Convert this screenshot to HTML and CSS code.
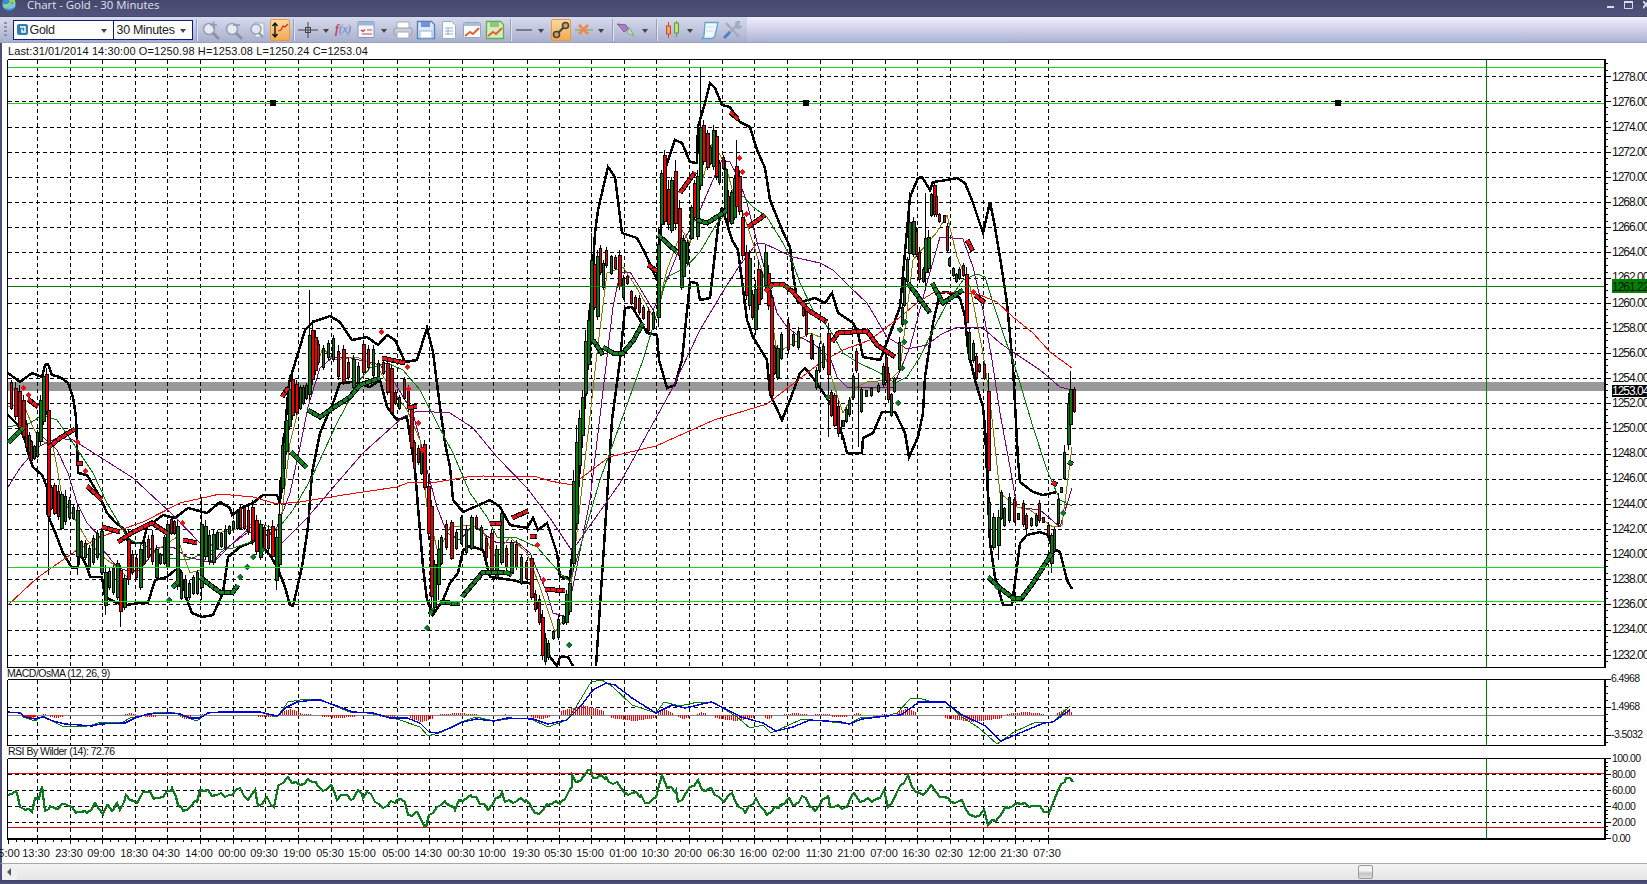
FILE: index.html
```html
<!DOCTYPE html>
<html lang="en">
<head>
<meta charset="utf-8">
<title>Chart - Gold - 30 Minutes</title>
<link rel="stylesheet" href="styles.css">
</head>
<body>
<div class="window">
  <header class="titlebar">
    <svg class="appicon" width="16" height="14" viewBox="0 0 16 14"><circle cx="7" cy="5" r="7" fill="#3b8fd0"/><path d="M1 8q6 4 12 0v-3H1z" fill="#7cc0ea"/><path d="M3 9L11 1M7 1h5v5" fill="none" stroke="#9bd45a" stroke-width="2"/></svg>
    <span class="title">Chart - Gold - 30 Minutes</span>
    <span class="winctl">
      <svg width="8" height="8" viewBox="0 0 8 8"><rect y="5" width="7" height="2" fill="#d9dbe8"/></svg>
      <svg width="10" height="8" viewBox="0 0 10 8"><path d="M.5 1.5h8v6h-8z" fill="none" stroke="#d9dbe8"/><rect width="9" height="2" fill="#d9dbe8"/></svg>
      <svg width="6" height="8" viewBox="0 0 6 8"><path d="M0 0l6 7M6 0L0 7" stroke="#d9dbe8" stroke-width="2"/></svg>
    </span>
  </header>

  <nav class="toolbar">
    <div class="tools">
      <span class="grip"></span>
      <div class="combo combo-symbol">
        <svg class="symbol" width="11" height="11" viewBox="0 0 11 11"><rect width="11" height="11" rx="2" fill="#2f7fb0"/><path d="M3 3h5v5H5V5" fill="none" stroke="#fff" stroke-width="1.4"/></svg>
        <span class="combo-text">Gold</span><i class="arrow"></i>
      </div>
      <div class="combo combo-period"><span class="combo-text clip">30 Minutes</span><i class="arrow"></i></div>
      <span class="sep"></span>
      <svg class="ico" width="22" height="22" viewBox="0 0 22 22"><circle cx="9" cy="10" r="5.500" fill="#e6ecf5" stroke="#98a0b0" stroke-width="1.600"/><path d="M13 14l6 6" stroke="#8a909e" stroke-width="2.600"/><path d="M10 6h7M13.500 2.500v7" stroke="#8f99ae" stroke-width="1.600"/></svg>
      <svg class="ico" width="22" height="22" viewBox="0 0 22 22"><circle cx="9" cy="10" r="5.500" fill="#e6ecf5" stroke="#98a0b0" stroke-width="1.600"/><path d="M13 14l6 6" stroke="#8a909e" stroke-width="2.600"/><path d="M10 6h7" stroke="#8f99ae" stroke-width="1.600"/></svg>
      <svg class="ico" width="22" height="22" viewBox="0 0 22 22"><rect x="9" y="4" width="9" height="14" fill="#eef1f7" stroke="#a9b0be"/><circle cx="10" cy="10" r="5" fill="#dfe9f6" stroke="#98a0b0" stroke-width="1.500"/><path d="M13 14l4 4" stroke="#8a909e" stroke-width="2"/></svg>
      <span class="btn-on"><svg width="18" height="20" viewBox="0 0 18 20"><path d="M4 3v14M1.500 6L4 3l2.500 3M1.500 14L4 17l2.500-3" fill="none" stroke="#111" stroke-width="1.400"/><path d="M7 11l3-1 2-4 2 1 3-3" fill="none" stroke="#e2231a" stroke-width="1.200"/></svg></span>
      <span class="sep"></span>
      <svg class="ico" width="22" height="22" viewBox="0 0 22 22"><path d="M1 11h20M11 3v16" stroke="#444" stroke-width="1"/><rect x="8.500" y="8.500" width="5" height="5" fill="none" stroke="#444"/></svg>
      <i class="arrow drop"></i>
      <span class="fx"><b>f</b>(x)</span>
      <svg class="ico" width="20" height="22" viewBox="0 0 20 22"><rect x="1" y="2.500" width="16" height="16" rx="1" fill="#f4f6fb" stroke="#7f9ab8"/><rect x="1" y="2.500" width="16" height="4" fill="#9db6d2"/><path d="M4 11l2 1.500 2-2" fill="none" stroke="#d8332a" stroke-width="1.300"/><path d="M10 11h5M5 15h10" stroke="#c04a4a"/></svg>
      <i class="arrow drop"></i>
      <svg class="ico" width="22" height="22" viewBox="0 0 22 22"><rect x="5" y="3" width="12" height="7" fill="#fff" stroke="#a4aab6"/><rect x="2" y="9" width="18" height="7" rx="2" fill="#ccd0da" stroke="#949aa8"/><rect x="5" y="13" width="12" height="6" fill="#fff" stroke="#a4aab6"/></svg>
      <svg class="ico" width="22" height="22" viewBox="0 0 22 22"><path d="M2.500 2.500h14l3 3v14h-17z" fill="#dbe6f6" stroke="#5a80c0" stroke-width="1.400"/><rect x="6" y="3" width="9" height="5" fill="#6f96d0"/><rect x="5" y="12" width="12" height="7" fill="#fff" stroke="#9ab4da"/></svg>
      <svg class="ico" width="22" height="22" viewBox="0 0 22 22"><path d="M4.500 2.500h9l4 4v13h-13z" fill="#fff" stroke="#8fb4d0"/><path d="M7 9h8M7 12h8M7 15h8M10 9v7" stroke="#8ab2d0"/></svg>
      <svg class="ico" width="22" height="22" viewBox="0 0 22 22"><rect x="2.500" y="3.500" width="17" height="15" rx="1" fill="#fff" stroke="#8fa9c4"/><rect x="3" y="4" width="16" height="3" fill="#a8bfd8"/><path d="M4 17l5-4 3 2 6-6" fill="none" stroke="#e0603a" stroke-width="2"/></svg>
      <svg class="ico" width="22" height="22" viewBox="0 0 22 22"><path d="M2.500 2.500h14l3 3v14h-17z" fill="#d4ecc0" stroke="#66ab50" stroke-width="1.300"/><rect x="6" y="3" width="9" height="5" fill="#8fc878"/><path d="M4 17l5-4 3 2 6-6" fill="none" stroke="#e0603a" stroke-width="2"/></svg>
      <span class="sep"></span>
      <svg class="ico" width="20" height="22" viewBox="0 0 20 22"><path d="M2 11h16" stroke="#333"/></svg>
      <i class="arrow drop"></i>
      <span class="btn-on btn-link"><svg width="18" height="18" viewBox="0 0 18 18"><path d="M4 14l10-10" stroke="#444" stroke-width="2.200"/><circle cx="4.500" cy="13.500" r="3" fill="#d9a05a" stroke="#444" stroke-width="1.600"/><circle cx="13.500" cy="4.500" r="3" fill="#d9a05a" stroke="#444" stroke-width="1.600"/></svg></span>
      <svg class="ico" width="20" height="22" viewBox="0 0 20 22"><path d="M1 11h18" stroke="#78a83c"/><path d="M5 6l9 9M14 6l-9 9" stroke="#ef8a50" stroke-width="3"/></svg>
      <i class="arrow drop"></i>
      <span class="sep"></span>
      <svg class="ico" width="22" height="22" viewBox="0 0 22 22"><path d="M1 5l9 1 2 4-4 3-3-4z" fill="#b07cc4" stroke="#7a5c98"/><path d="M13 8l5 9-7-3z" fill="#c4e0b8" stroke="#88a88a"/></svg>
      <i class="arrow drop"></i>
      <span class="sep"></span>
      <svg class="ico ico-candle" width="20" height="22" viewBox="0 0 20 22"><path d="M5.500 3v16" stroke="#d8402a"/><rect x="3.500" y="7" width="4" height="8" fill="#f5a85e" stroke="#d8402a"/><path d="M13.500 2v16" stroke="#5c9a44"/><rect x="11.500" y="4" width="4" height="10" fill="#c0e47a" stroke="#5c9a44"/></svg>
      <i class="arrow drop"></i>
      <svg class="ico" width="22" height="22" viewBox="0 0 22 22"><path d="M7 3.500h13l-3 13q-1 3-4 3H3q3 0 3-3z" fill="#f2f8fd" stroke="#5ca6d0" stroke-width="1.300"/><path d="M9 8h7M8 12h7" stroke="#c4dcec"/></svg>
      <svg class="ico" width="22" height="22" viewBox="0 0 22 22"><path d="M5 4l13 14" stroke="#a2acbc" stroke-width="2.500"/><path d="M18 4L8 14" stroke="#a2acbc" stroke-width="2.500"/><path d="M9 13l-6 6" stroke="#4a80c4" stroke-width="3"/><path d="M14 4a3.500 3.500 0 0 1 6-1l-3 2 1 2 3-1a3.500 3.500 0 0 1-6 3z" fill="#a2acbc"/></svg>
    </div>
    <div class="toolbar-rest"></div>
  </nav>

  <div class="info">Last:31/01/2014 14:30:00 O=1250.98 H=1253.08 L=1250.24 C=1253.04</div>

  <svg id="chart" class="chart" width="1647" height="804" viewBox="0 59 1647 804">
    <g id="plot"></g>
    <g class="lbl-main">
      <text x="1612" y="81">1278.00</text><text x="1612" y="106">1276.00</text><text x="1612" y="131">1274.00</text><text x="1612" y="156">1272.00</text><text x="1612" y="181">1270.00</text><text x="1612" y="206">1268.00</text><text x="1612" y="231">1266.00</text><text x="1612" y="256">1264.00</text><text x="1612" y="281">1262.00</text><text x="1612" y="307">1260.00</text><text x="1612" y="332">1258.00</text><text x="1612" y="357">1256.00</text><text x="1612" y="382">1254.00</text><text x="1612" y="407">1252.00</text><text x="1612" y="432">1250.00</text><text x="1612" y="457">1248.00</text><text x="1612" y="482">1246.00</text><text x="1612" y="508">1244.00</text><text x="1612" y="533">1242.00</text><text x="1612" y="558">1240.00</text><text x="1612" y="583">1238.00</text><text x="1612" y="608">1236.00</text><text x="1612" y="633">1234.00</text><text x="1612" y="659">1232.00</text>
    </g>
    <rect class="tag-green" x="1612" y="279" width="35" height="14"/>
    <text class="lbl-main" x="1612" y="291">1261.22</text>
    <rect class="tag-black" x="1612" y="385" width="35" height="12"/>
    <text class="lbl-main lbl-white" x="1612" y="395">1253.04</text>
    <g class="lbl-small">
      <text x="1611" y="682">6.4968</text><text x="1611" y="710">1.4968</text><text x="1611" y="738">-3.5032</text>
      <text x="1612" y="762">100.00</text><text x="1612" y="778">80.00</text><text x="1612" y="794">60.00</text><text x="1612" y="810">40.00</text><text x="1612" y="826">20.00</text><text x="1612" y="842">0.00</text>
    </g>
    <g class="lbl-pane">
      <text x="7" y="677">MACD/OsMA (12, 26, 9)</text>
      <text x="8" y="755">RSI By Wilder (14): 72.76</text>
    </g>
    <g class="lbl-time">
      <text x="6" y="857">15:00</text><text x="36" y="857">13:30</text><text x="69" y="857">23:30</text><text x="101" y="857">09:00</text><text x="134" y="857">18:30</text><text x="166" y="857">04:30</text><text x="199" y="857">14:00</text><text x="232" y="857">00:00</text><text x="264" y="857">09:30</text><text x="297" y="857">19:00</text><text x="330" y="857">05:30</text><text x="362" y="857">15:00</text><text x="396" y="857">05:00</text><text x="428" y="857">14:30</text><text x="461" y="857">00:30</text><text x="492" y="857">10:00</text><text x="526" y="857">19:30</text><text x="558" y="857">05:30</text><text x="590" y="857">15:00</text><text x="623" y="857">01:00</text><text x="655" y="857">10:30</text><text x="688" y="857">20:00</text><text x="721" y="857">06:30</text><text x="753" y="857">16:00</text><text x="786" y="857">02:00</text><text x="819" y="857">11:30</text><text x="851" y="857">21:00</text><text x="884" y="857">07:00</text><text x="916" y="857">16:30</text><text x="949" y="857">02:30</text><text x="982" y="857">12:00</text><text x="1014" y="857">21:30</text><text x="1047" y="857">07:30</text>
    </g>
  </svg>

  <div class="scrollbar">
    <span class="scroll-left"><i></i></span>
    <span class="scroll-thumb"></span>
  </div>
  <footer class="bottombar"></footer>
</div>
<script src="chart.js"></script>
</body>
</html>
```

FILE: styles.css
```css
* { box-sizing: border-box; }
html, body { margin: 0; padding: 0; height: 100%; overflow: hidden; background: #fff; }
body { font-family: "Liberation Sans", Arial, sans-serif; }
.window { width: 1647px; height: 884px; display: flex; flex-direction: column; overflow: hidden; }

.titlebar { height: 17px; flex: none; display: flex; align-items: flex-start; background: linear-gradient(#45486c, #50537c); border-bottom: 1px solid #474a6e; position: relative; overflow: hidden; }
.appicon { margin: -1px 0 0 2px; flex: none; }
.title { font-family: "Open Sans", sans-serif; font-size: 11.400px; line-height: 12px; color: #e0e1ec; margin: -1px 0 0 9px; }
.winctl { margin-left: auto; display: flex; gap: 9px; margin-top: 1px; margin-right: -2px; }

.toolbar { height: 26px; flex: none; display: flex; border-bottom: 1px solid #99a0c2; background: linear-gradient(#f0eefe, #aeb5d3); }
.tools { width: 747px; flex: none; display: flex; align-items: center; padding-left: 4px; background: linear-gradient(#d8dbee, #a9b0cd); }
.toolbar-rest { flex: 1; }
.grip { width: 3px; height: 16px; flex: none; margin-right: 6px; background: repeating-linear-gradient(#8a90a8 0 2px, transparent 2px 4px); }
.combo { height: 20px; flex: none; border: 1.500px solid #0c1b78; background: #fff; display: flex; align-items: center; font-size: 12.500px; letter-spacing: -.3px; color: #222; position: relative; }
.combo-symbol { width: 101px; padding-left: 3px; }
.combo-period { width: 80px; padding-left: 1px; margin-left: -1px; }
.combo-text { margin-left: 1.500px; }
.clip { width: 58px; overflow: hidden; white-space: nowrap; }
.symbol { flex: none; }
.arrow { display: block; flex: none; width: 0; height: 0; border: 3px solid transparent; border-top: 4px solid #444; border-bottom: 0; }
.combo .arrow { position: absolute; right: 6px; top: 8px; }
.drop { margin: 2px 5px 0 3px; }
.sep { width: 1px; height: 22px; flex: none; background: #99a0ba; border-right: 1px solid #dfe2f0; box-sizing: content-box; margin: 0 2px 0 3px; }
.ico { flex: none; margin-right: 1px; }
.ico-candle { margin-left: 3px; }
.btn-on { width: 20px; height: 22px; flex: none; display: flex; align-items: center; justify-content: center; background: linear-gradient(#fbd9a0, #f5a850); border: 1px solid #e89a3c; border-radius: 2px; margin-left: 1px; }
.btn-link { margin: 0 3px 0 2px; }
.fx { font: italic 700 12px "Liberation Serif", serif; color: #7f93c4; width: 22px; flex: none; margin-left: 1px; white-space: nowrap; letter-spacing: -.5px; }
.fx b { color: #c8454a; }

.info { height: 16px; flex: none; font-size: 11px; letter-spacing: .12px; line-height: 16px; padding-left: 6px; color: #111; border-left: 2px solid #4c4f78; white-space: nowrap; }
.chart { display: block; flex: none; shape-rendering: crispEdges; }
.chart text { font-family: "Liberation Sans", Arial, sans-serif; fill: #111; shape-rendering: auto; }
.lbl-main text, text.lbl-main { font-size: 12px; letter-spacing: -1px; }
.lbl-white { fill: #fff !important; }
.lbl-small text { font-size: 10.500px; letter-spacing: -.6px; }
.lbl-pane text { font-size: 10.500px; letter-spacing: -.5px; }
.lbl-time text { font-size: 11px; text-anchor: middle; }
.tag-green { fill: #008000; }
.tag-black { fill: #000; }

.l { fill: none; }
.frame { stroke: #000; stroke-width: 1; }
.frame2 { stroke: #000; stroke-width: 2; }
.grid { stroke: #000; stroke-width: 1; stroke-dasharray: 4 3; }
.band { stroke: #999; stroke-width: 9; }
.hl-bright { stroke: #1cd41c; stroke-width: 1; }
.hl-dark { stroke: #008000; stroke-width: 1; }
.zero { stroke: #888; stroke-width: 1; }
.hl-red { stroke: #e00000; stroke-width: 1; }
.bb { stroke: #000; stroke-width: 2.500; }
.ma-red { stroke: #f00; stroke-width: 1; }
.ma-purple { stroke: #800080; stroke-width: 1; }
.ma-olive { stroke: #808000; stroke-width: 1; }
.ma-green { stroke: #008000; stroke-width: 1; }
.mk-out { stroke: #000; stroke-width: 5; }
.mk-red { stroke: #ff1010; stroke-width: 3; stroke-dasharray: 5 1; }
.mk-green { stroke: #0a8a1a; stroke-width: 3; stroke-dasharray: 5 1; }
.dot-red { fill: #f01010; }
.dot-green { fill: #0a7a1a; stroke: #033; stroke-width: .5; }
.wick { stroke: #000; stroke-width: 1; }
.c-black { fill: #000; }
.c-red { fill: #f00000; }
.c-green { fill: #087a08; }
.handle { fill: #000; }
.macd-blue { stroke: #0000e0; stroke-width: 1.400; }
.macd-green { stroke: #008000; stroke-width: 1; }
.hist { stroke: #f00; stroke-width: 1; }
.rsi { stroke: #0a7a1a; stroke-width: 2.200; }
.edge { fill: #4c4f78; }

.scrollbar { height: 17px; flex: none; display: flex; align-items: center; border-top: 1px solid #a8a8a8; border-left: 2px solid #4c4f78; background: linear-gradient(#f3f3f3, #e5e5e5); }
.scroll-left { width: 15px; height: 16px; display: flex; align-items: center; padding-left: 5px; background: #f0f0f0; }
.scroll-left i { display: block; border: 4px solid transparent; border-right: 4px solid #555; border-left: 0; }
.scroll-thumb { width: 15px; height: 14px; margin-left: 1341px; border: 1px solid #999; border-radius: 2px; background: linear-gradient(#f4f4f4 0 40%, #c4c4c4 60%, #dedede); }
.bottombar { height: 4px; flex: none; background: linear-gradient(#3f4268, #4f527c); }
```

FILE: chart.js
```js
var NS = 'http://www.w3.org/2000/svg', plot = document.getElementById('plot');
function el(tag, cls, attrs) {
  var e = document.createElementNS(NS, tag);
  if (cls) e.setAttribute('class', cls);
  for (var k in attrs) e.setAttribute(k, attrs[k]);
  plot.appendChild(e);
  return e;
}
function path(cls, d) { return el('path', 'l ' + cls, { d: d }); }
function line(cls, pts) { return el('polyline', 'l ' + cls, { points: pts }); }

var gx = [37,70,102,135,167,200,233,265,298,331,363,397,429,462,493,527,559,591,624,656,689,722,754,787,820,852,885,917,950,983,1015,1048];

/* grey band + grid */
path('band', 'M8 386.500H1604');
var d = '';
for (var i = 0; i < 24; i++) d += 'M8 ' + Math.round(76.3 + 25.15 * i) + '.5H1604';
[707, 735, 774, 790, 806, 822].forEach(function (y) { d += 'M8 ' + y + '.5H1604'; });
path('grid', 'M8 758.500H1604');
path('grid', d);
var v = '';
gx.forEach(function (x) {
  v += 'M' + x + '.5 60V667M' + x + '.5 680V745M' + x + '.5 758V838';
});
path('grid', v);

/* frames */
path('frame', 'M7.500 59.500H1605M7.500 59.500V667.500H1605M7.500 679.500H1605M7.500 679.500V745.500H1605M7.500 758.500H1605M7.500 758.500V838');
path('frame2', 'M1605 59V668M1605 679V746M1605 758V840M7 839H1606');
el('rect', 'edge', { x: 0, y: 59, width: 2, height: 804 });

/* axis ticks */
var t = '';
for (var k = 0; k < 24; k++) {
  var y0 = Math.round(76.3 + 25.15 * k);
  t += 'M1606 ' + y0 + '.5H1611';
  for (var m = -2; m < 2; m++) if (m) t += 'M1606 ' + Math.round(y0 + m * 6.3) + '.5H1608';
}
[679, 707, 735].forEach(function (y) { t += 'M1606 ' + y + '.5H1611'; });
[686, 693, 700, 714, 721, 728, 742].forEach(function (y) { t += 'M1606 ' + y + '.5H1608'; });
for (var r = 758; r <= 838; r += 16) {
  t += 'M1606 ' + r + '.5H1611';
  for (var q = 1; q < 4 && r < 838; q++) t += 'M1606 ' + (r + q * 4) + '.5H1608';
}
[8].concat(gx).forEach(function (x) {
  t += 'M' + x + '.5 840V844';
  if (x < 1048) for (var q = 1; q < 4; q++) t += 'M' + Math.round(x + q * 8.1) + '.5 840V842';
});
path('frame', t);

/* horizontal study lines */
path('hl-bright', 'M8 67.500H1604M8 103.500H1604M8 567.500H1604M8 601.500H1604');
path('hl-dark', 'M8 286.500H1604');
path('ma-green', 'M1486.500 60V667M1486.500 680V745M1486.500 758V838');
path('zero', 'M8 715.500H1486M1487 715.500H1604');
path('hl-red', 'M8 773.500H1604M8 827.500H1604');

/* handles on the selected line */
[[270, 100], [803, 100], [1335, 100]].forEach(function (p) {
  el('rect', 'handle', { x: p[0], y: p[1], width: 6, height: 6 });
});

/* Bollinger bands */
[
 '8,373 20,382 32,373 42,377 45,365 48,364 52,375 60,377 68,383 73,397 76,417 77,443 78,473 87,475 100,497 107,513 115,522 125,530 127,540 132,543 143,543 147,527 163,515 175,518 188,508 207,513 220,502 230,508 232,515 243,507 253,503 263,495 277,495 280,503 285,430 289,383 302,340 305,330 313,322 330,316 340,322 352,340 367,337 378,345 387,335 395,340 405,362 417,360 427,328 433,352 440,407 445,443 450,467 453,500 463,512 490,500 500,507 510,525 527,528 533,518 538,530 547,523 557,553 560,577 570,578 578,490 585,400 590,317 595,233 598,210 608,167 615,177 622,233 637,238 645,253 657,280 660,240 665,170 675,140 682,143 690,162 697,163 698,127 705,103 710,83 715,88 722,105 730,107 740,122 750,127 757,150 765,168 770,200 783,232 790,247 793,273 795,287 798,303 815,298 825,303 832,293 838,313 853,323 858,333 863,357 880,360 883,353 900,307 910,197 918,178 922,177 930,190 933,182 947,180 957,178 965,183 972,200 977,215 983,233 990,202 995,227 1002,270 1007,303 1013,367 1018,460 1020,482 1033,492 1043,495 1057,492',
 '8,415 18,425 25,440 28,453 33,467 42,475 47,487 47,513 55,532 63,553 72,568 78,567 80,553 87,567 90,577 102,577 105,597 117,603 127,605 138,603 148,603 155,580 167,577 175,570 180,570 187,600 192,613 202,617 213,615 223,593 228,557 240,547 257,540 270,555 277,567 285,587 290,605 293,606 302,567 308,527 312,473 320,433 333,403 340,383 353,382 370,387 380,380 387,407 397,420 407,417 415,470 423,567 427,600 433,615 443,600 450,583 458,573 463,550 470,546 483,550 490,577 512,580 520,582 530,583 540,613 547,653 557,666 560,657 568,657 573,666',
 '596,666 604,546 612,420 620,360 625,308 632,307 640,320 647,333 657,335 659,360 667,388 675,385 682,360 690,282 697,283 700,300 710,298 712,280 718,227 722,207 732,240 738,250 747,320 753,337 767,360 770,394 782,420 790,400 800,373 805,368 817,383 830,403 843,437 847,453 862,453 863,438 873,433 882,412 895,412 905,433 909,457 918,437 923,413 925,377 933,323 940,293 947,292 960,298 965,317 968,350 975,380 983,407 985,427 988,497 990,543 995,577 1003,605 1012,605 1017,567 1020,543 1027,535 1040,532 1048,535 1052,548 1060,552 1067,580 1072,589'
].forEach(function (b) { line('bb', b); });

/* moving averages */
line('ma-red', '8,605 37,578 77,550 100,537 143,522 180,503 220,494 253,497 277,504 300,502 343,495 397,487 410,482 437,482 467,477 483,476 537,477 550,481 572,485 609,457 656,446 714,420 767,404 820,363 843,350 870,340 900,317 918,302 933,293 963,292 980,295 997,302 1013,317 1033,333 1050,352 1072,368');
line('ma-purple', '8,487 20,468 38,447 57,438 73,440 100,457 133,478 173,515 200,543 213,563 220,553 247,533 267,530 280,545 307,518 337,483 363,453 403,417 417,411 450,413 473,428 497,457 527,488 550,518 572,551 620,483 672,389 700,330 722,293 740,265 757,243 763,243 793,257 820,263 833,270 850,287 867,303 887,337 907,349 927,345 940,335 957,327 983,328 1000,343 1013,352 1040,370 1060,387 1072,390');
line('ma-purple', '43,437 57,450 68,473 77,503 87,523 100,537 103,550 117,567 125,570 140,570 157,547 173,547 187,557 213,563 233,543 253,525 267,535 277,527 290,493 300,447 308,407 320,368 333,357 347,357 380,365 393,380 407,403 413,413 420,440 427,470 437,507 447,533 460,540 473,525 483,533 497,543 517,542 530,553 547,593 553,613 567,617 590,500 613,307 620,273 630,272 643,293 653,310 667,280 680,247 697,217 713,180 722,160 730,162 738,177 747,203 757,242 767,277 777,313 787,327 800,337 815,345 830,357 837,377 848,388 873,387 893,387 910,347 927,283 940,237 963,239 973,267 983,310 992,360 1000,413 1010,467 1017,507 1040,510 1060,527 1072,488');
line('ma-olive', '8,407 23,403 33,427 40,440 53,447 57,467 62,497 77,523 87,540 103,557 117,567 127,577 140,567 157,550 177,537 190,573 200,570 217,533 233,530 257,523 280,530 290,443 300,403 313,373 323,348 333,360 357,357 377,367 390,387 407,410 420,440 427,507 438,553 450,527 470,525 483,530 493,557 510,537 527,553 540,587 555,632 568,613 597,353 607,273 623,267 638,290 655,320 667,270 682,230 690,243 700,190 713,140 727,170 733,193 743,213 753,243 767,287 777,353 790,345 810,333 820,337 830,373 843,413 857,387 867,382 890,380 900,370 913,260 937,232 947,215 957,257 970,287 983,353 990,400 1000,493 1017,507 1030,510 1053,527 1062,525 1072,447');
line('ma-green', '8,427 30,423 43,415 57,420 73,443 93,473 107,503 123,530 130,540 147,547 167,558 187,560 213,550 233,548 257,540 277,530 293,510 312,477 337,423 360,380 370,368 387,363 403,370 420,390 437,423 453,453 470,493 487,517 497,537 517,538 537,547 560,573 570,582 600,480 643,360 657,313 667,277 685,268 700,252 717,223 743,196 753,207 767,217 783,243 793,263 800,283 813,310 830,330 843,353 857,362 880,373 895,383 907,377 920,357 933,330 947,303 963,280 977,274 985,277 993,303 1003,333 1017,373 1033,427 1047,470 1060,500 1072,506');

/* candles: x, top, bottom */
var cd = '10 380 410,14 382 420,18 385 432,22 395 440,25 420 450,28 432 455,30 440 462,33 445 460,36 430 458,39 395 445,42 370 425,45 368 415,47 385 530,50 485 510,53 483 515,57 485 520,60 492 530,64 490 525,68 497 520,72 505 520,76 505 560,80 540 558,84 540 560,88 545 570,92 535 565,96 530 560,100 528 575,104 565 610,108 568 590,112 565 595,116 560 600,119 565 615,123 575 610,127 530 585,131 550 575,135 555 580,139 545 590,143 540 565,147 535 560,151 530 565,155 545 580,159 553 565,163 535 565,166 520 570,170 518 535,173 520 535,176 520 590,180 570 600,184 575 600,188 580 600,192 575 595,196 570 595,200 520 590,204 520 560,208 530 565,212 530 565,216 530 550,220 532 548,224 525 550,228 525 535,232 520 530,236 510 530,239 505 530,243 505 530,247 505 535,251 500 545,255 515 555,259 520 560,263 525 550,267 525 552,271 520 560,275 530 585,278 505 570,281 437 493,283 440 470,285 415 455,288 383 430,291 372 420,295 380 415,299 385 410,302 385 405,305 383 400,308 325 400,311 320 385,314 330 375,317 340 365,322 345 370,327 340 360,332 335 362,337 345 380,342 345 385,347 358 380,352 355 390,357 362 385,362 340 375,367 345 370,372 345 378,377 360 380,382 360 375,386 360 395,390 365 415,394 390 405,398 395 410,403 377 400,407 385 412,410 405 450,413 440 470,417 445 465,420 447 475,423 440 490,427 475 540,430 500 600,433 560 610,437 540 590,440 535 565,445 520 550,450 520 560,455 530 550,460 515 545,465 525 555,470 515 550,475 515 530,480 525 550,485 535 560,490 530 575,495 545 580,500 510 565,505 545 570,510 540 575,515 540 570,520 555 585,525 560 580,530 555 600,534 590 612,538 595 625,541 610 660,544 633 665,547 640 660,552 630 640,557 615 640,562 615 625,565 590 625,568 578 615,572 470 570,575 430 530,578 410 470,581 390 440,584 330 400,587 310 370,590 255 345,593 260 310,596 250 320,599 245 275,602 260 290,605 247 268,610 255 275,614 255 270,618 250 290,622 275 300,626 275 285,630 290 305,634 295 310,638 295 315,642 305 320,647 307 333,652 310 330,657 227 327,660 170 227,663 150 225,667 180 230,670 177 233,674 160 230,678 200 260,680 235 290,682 235 280,686 240 265,690 205 240,693 180 220,696 170 240,699 120 190,702 120 165,706 130 170,709 145 165,712 125 170,715 130 180,718 160 185,722 155 170,724 160 215,727 190 225,730 190 225,733 175 220,735 160 210,738 170 215,741 210 260,745 245 300,748 250 310,751 290 320,754 280 335,757 260 310,760 270 300,764 245 290,767 265 310,770 290 400,773 345 375,776 345 380,780 332 360,787 317 353,792 332 347,797 327 350,802 300 317,805 303 337,810 333 360,815 367 390,818 343 373,822 343 370,827 323 380,830 390 417,833 393 427,837 400 437,842 420 427,845 407 423,848 397 417,852 373 400,855 348 373,860 387 413,865 390 397,870 387 397,877 383 393,882 363 387,885 353 383,887 367 403,890 393 417,893 377 393,898 337 373,901 303 327,903 277 307,906 257 283,908 217 257,912 217 257,915 227 257,918 247 283,922 267 283,924 230 277,927 230 273,930 193 217,933 182 217,935 193 217,938 213 223,943 215 223,946 223 253,948 257 267,952 267 277,955 273 283,958 267 280,962 263 277,965 267 327,968 327 363,972 340 363,975 353 380,978 363 373,983 363 380,987 373 480,988 497 533,992 513 550,997 510 550,1000 490 520,1003 507 527,1008 493 523,1013 497 523,1017 513 520,1022 500 527,1025 513 530,1030 517 527,1035 513 527,1038 500 523,1042 517 523,1047 523 537,1050 533 565,1053 527 553,1057 493 527,1060 487 493,1063 450 480,1067 393 450,1069 385 427,1073 387 413'
  .split(',').map(function (s) { return s.split(' ').map(Number); });
var wicks = '308 290 400,590 233 300,699 67 150,735 140 200,857 373 447,924 193 290,827 323 437,1069 371 430,119 565 627,200 497 600,76 505 575,47 385 575,1050 533 573,908 192 260,430 500 612,278 480 560,275 530 590,437 540 600,997 510 560,575 425 530,1025 513 535,104 565 615,288 375 400,812 340 360,1063 445 470,840 420 440';
var w = '';
cd.forEach(function (c) { w += 'M' + (c[0] + 1) + '.5 ' + c[1] + 'V' + c[2]; });
wicks.split(',').forEach(function (s) {
  var a = s.split(' ');
  w += 'M' + (+a[0] + 1) + '.5 ' + a[1] + 'V' + a[2];
});
path('wick', w);
cd.forEach(function (c, i) {
  var h = c[2] - c[1], ins = h > 8 ? Math.round(h * (0.06 + ((c[0] * 7) % 10) / 80)) : 0;
  var top = c[1] + ins, bot = c[2] - Math.round(ins / 2), n = cd[i + 1] || c;
  var up = (n[1] + n[2]) < (c[1] + c[2]) || c[0] % 4 === 0;
  var big = bot - top > 28;
  el('rect', 'c-black', { x: c[0], y: top, width: big ? 4 : 3, height: bot - top });
  if (bot - top > 2) el('rect', up ? 'c-green' : 'c-red', { x: c[0] + 1, y: top + 1, width: big ? 2 : 1, height: bot - top - 2 });
});

/* marker trails */
var reds = ['28,399 38,407','48,448 60,438 75,429','77,463 83,463','87,486 102,500','102,527 120,532','118,542 133,532 152,523 167,533','183,540 197,543','282,397 288,388','382,358 405,363','408,408 417,406','490,523 502,523','512,518 528,511','530,536 537,536','545,589 565,591','648,265 657,271','680,193 695,172','730,112 738,119','748,227 765,215','765,292 773,284 783,284 793,292 808,310 827,322','832,342 838,333 867,331 877,345 895,357','967,240 973,251','975,295 985,303','1052,482 1057,485'];
var greens = ['8,443 23,428','172,588 178,582','200,577 210,585 220,592 233,592 238,585','291,452 307,468','308,410 320,417 333,408 350,397 360,385 380,378','430,615 433,608','440,602 460,604','462,597 483,572 505,572','505,572 512,575','658,235 677,252','593,340 603,355','603,347 613,353 623,353 633,341 643,323','697,220 707,223 720,215 727,210','908,283 930,313','932,283 943,303 963,290','988,577 1000,588 1013,598 1022,598 1033,583 1052,553','1068,462 1073,464'];
reds.concat(greens).forEach(function (p) { line('mk-out', p); });
reds.forEach(function (p) { line('mk-red', p); });
greens.forEach(function (p) { line('mk-green', p); });
function diamond(cls, x, y) { el('path', cls, { d: 'M' + (x - 3) + ' ' + y + 'L' + x + ' ' + (y - 3) + 'L' + (x + 3) + ' ' + y + 'L' + x + ' ' + (y + 3) + 'Z' }); }
[[23,388],[28,395],[77,442],[85,471],[182,523],[381,332],[407,367],[408,389],[418,423],[422,450],[537,545],[543,580],[739,158],[742,172],[746,214],[973,292]].forEach(function (p) { diamond('dot-red', p[0], p[1]); });
[[240,577],[247,567],[253,557],[262,550],[427,628],[169,600],[905,322],[904,342],[902,368],[898,403],[828,397],[997,587],[1063,513],[569,645],[900,330]].forEach(function (p) { diamond('dot-green', p[0], p[1]); });

/* bright lines repeat over the candles */
path('hl-bright', 'M8 567.500H1604M8 601.500H1604');
path('hl-dark', 'M8 286.500H1604');

/* MACD histogram */
var bars = [[22,35,-2],[43,45,2],[23,35,-3],[50,62,-2],[125,135,2],[145,155,-1],[180,190,-3],[200,205,1],[258,272,-1],[280,300,6],[300,310,1],[322,355,-2],[380,395,-2],[410,433,-6],[440,476,2],[505,506,1],[531,550,-3],[561,604,10],[611,656,-5],[658,672,5],[678,689,-3],[697,706,3],[715,754,-5],[765,771,-4],[784,806,2],[815,830,1],[832,847,-1],[854,860,3],[882,886,1],[897,916,7],[945,1001,-6],[1007,1044,3],[1057,1072,6]];
var hb = '';
bars.forEach(function (b) {
  var mid = (b[0] + b[1]) / 2, half = Math.max(1, (b[1] - b[0]) / 2);
  for (var x = b[0]; x <= b[1]; x += 2) {
    var f = 1 - Math.abs(x - mid) / half * 0.6, ht = Math.max(1, Math.round(Math.abs(b[2]) * f));
    hb += 'M' + x + '.5 715V' + (b[2] > 0 ? 715 - ht : 716 + ht);
  }
});
path('hist', hb);
line('macd-green', '8,712 20,712 23,717 35,721 43,716 52,721 62,726 82,727 92,725 98,723 123,722 130,718 147,715 153,713 173,712 180,715 197,721 207,713 217,712 260,712 273,716 277,717 288,702 300,700 310,699 322,700 337,707 350,712 367,713 385,716 400,720 420,727 428,736 442,732 461,722 476,717 494,721 515,718 531,719 548,727 567,720 576,707 591,682 602,680 613,687 632,705 656,713 664,702 680,706 698,702 715,703 737,717 750,728 763,725 771,733 789,725 802,719 832,722 849,724 860,718 886,716 897,713 910,699 919,698 932,702 945,702 962,717 979,728 997,744 1014,732 1036,722 1053,722 1070,706');
line('macd-blue', '8,712 20,713 25,717 35,719 43,717 53,721 65,724 80,725 92,726 100,724 125,723 135,718 148,714 170,713 180,714 190,718 200,718 208,713 220,712 260,712 277,716 287,707 297,702 313,700 320,700 337,706 353,712 373,713 390,718 407,718 420,723 429,732 437,733 450,728 463,722 476,719 494,721 507,718 533,719 548,724 567,720 580,707 593,690 606,683 615,685 632,698 656,713 672,705 685,708 711,702 724,708 741,717 763,723 776,731 793,727 810,720 841,722 849,724 862,719 886,716 901,715 919,702 945,702 962,715 984,725 1001,741 1027,730 1044,723 1053,722 1070,710');

/* RSI: the traced points get the small bar-to-bar wobble of the series */
var rsi = '8,795 17,793 20,807 25,810 32,812 35,798 39,799 42,786 45,811 50,806 58,809 65,804 72,807 77,812 87,813 95,803 103,814 108,805 113,810 117,803 120,810 126,795 137,803 143,792 150,792 155,798 163,797 172,788 178,805 183,811 197,802 200,790 217,795 232,795 240,788 248,800 255,790 258,806 267,797 274,807 279,785 288,777 292,783 300,785 308,779 317,785 323,791 332,786 337,800 343,795 353,799 358,790 363,798 367,792 380,805 383,808 397,800 405,802 408,815 417,812 420,817 426,827 429,815 437,807 446,803 455,810 459,800 472,797 485,805 488,810 502,792 505,802 526,800 531,807 539,814 548,805 561,802 572,787 572,775 576,782 591,770 593,778 606,777 609,782 617,782 624,792 641,795 645,803 656,797 662,775 667,788 676,790 678,802 698,780 702,790 711,788 719,797 724,802 732,793 739,807 745,813 756,798 767,815 780,805 789,798 795,805 802,796 812,807 815,811 828,795 830,807 847,807 854,793 860,802 880,798 884,790 888,807 908,775 912,787 923,795 932,786 936,792 951,802 962,800 966,810 975,817 984,810 988,825 999,817 1005,807 1021,804 1036,806 1049,813 1057,793 1066,778 1073,782'.split(' ').map(function (s) { return s.split(',').map(Number); });
var rp = [];
rsi.forEach(function (p, i) {
  rp.push(p.join(','));
  var n = rsi[i + 1];
  if (!n) return;
  var gap = n[0] - p[0];
  for (var j = 1; j * 4 < gap; j++) {
    var f = j * 4 / gap, wob = ((p[0] + j * 5) % 3) * 2 - 2;
    rp.push(Math.round(p[0] + gap * f) + ',' + Math.round(p[1] + (n[1] - p[1]) * f + wob));
  }
});
line('rsi', rp.join(' '));
```
